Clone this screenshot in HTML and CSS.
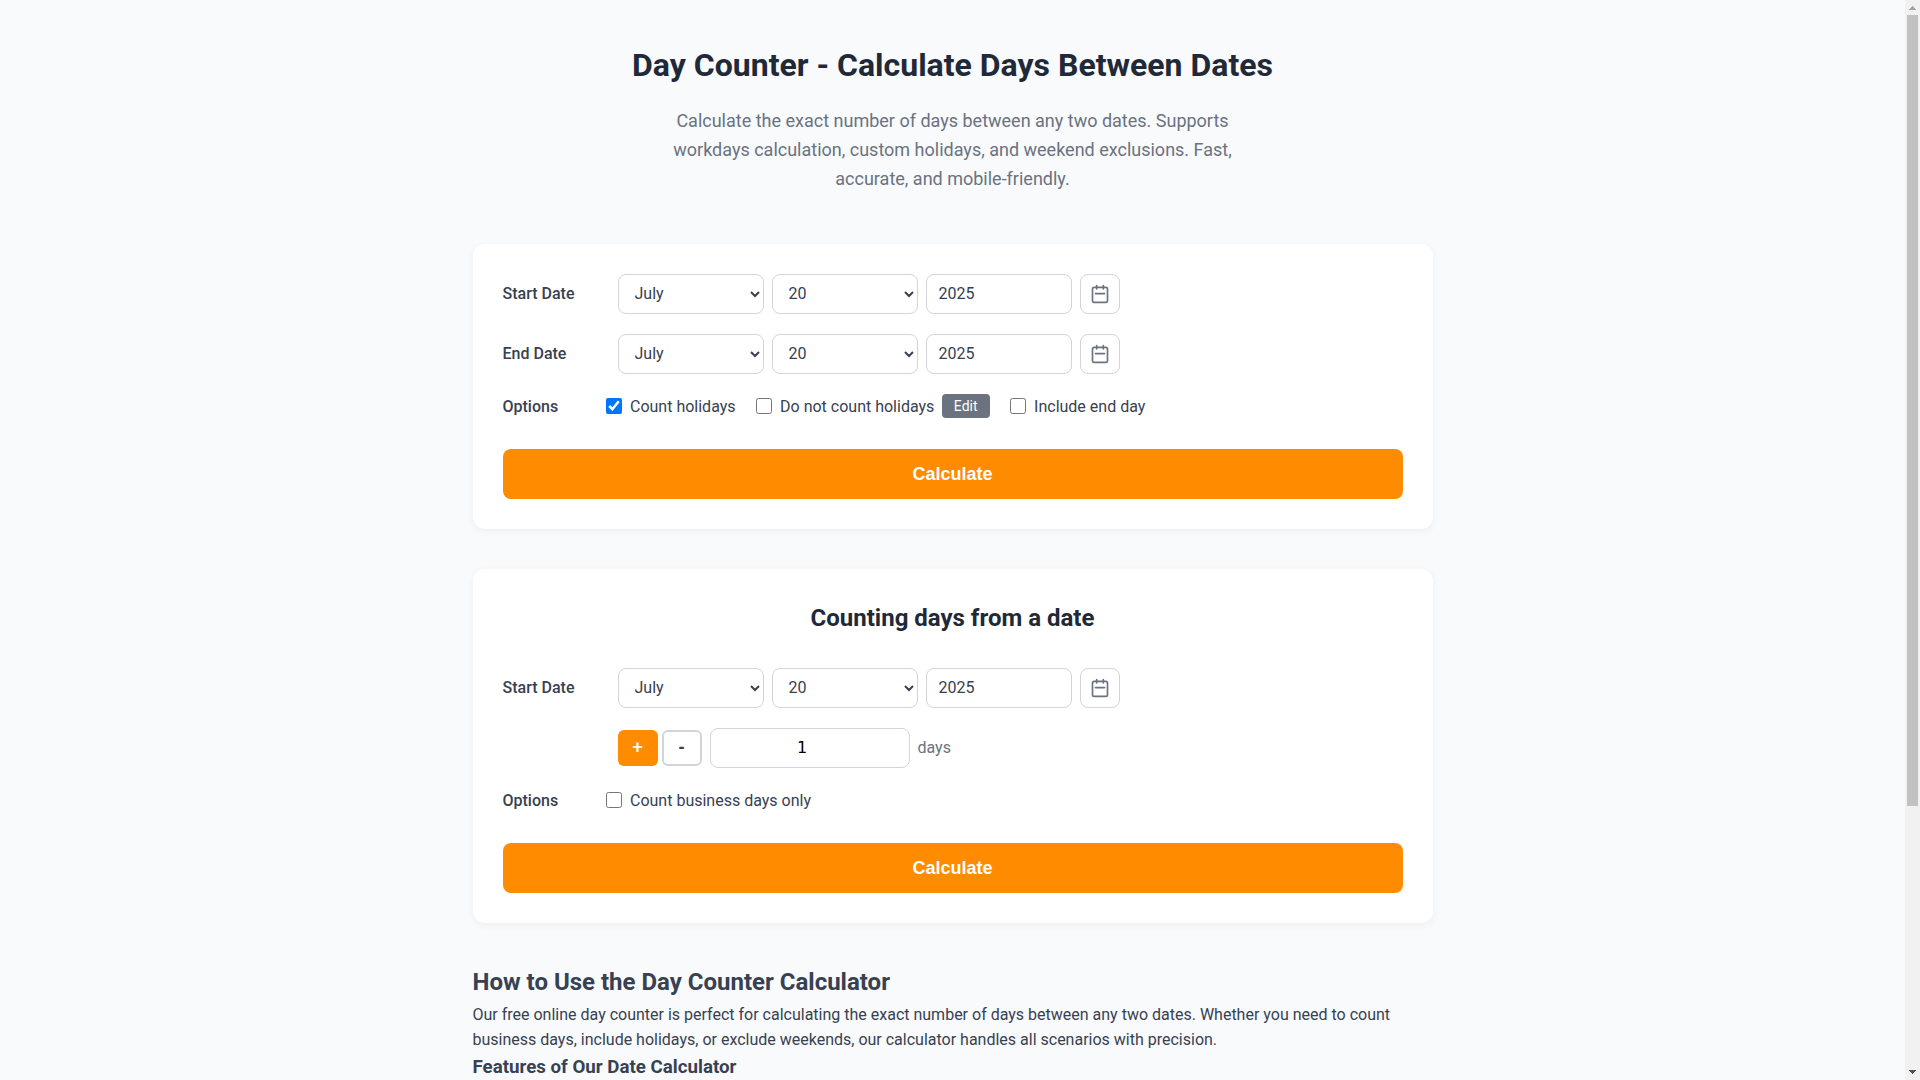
FILE: index.html
```html
<!DOCTYPE html>
<html lang="en">
<head>
<meta charset="utf-8">
<title>Day Counter - Calculate Days Between Dates</title>
<link rel="stylesheet" href="styles.css">
</head>
<body>
<main class="container">
  <header class="page-header">
    <h1>Day Counter - Calculate Days Between Dates</h1>
    <p>Calculate the exact number of days between any two dates. Supports workdays calculation, custom holidays, and weekend exclusions. Fast, accurate, and mobile-friendly.</p>
  </header>

  <section class="card">
    <div class="row">
      <label class="row-label">Start Date</label>
      <div class="fields">
        <select class="field"><option>July</option></select>
        <select class="field"><option>20</option></select>
        <input class="field" type="text" value="2025">
        <button class="icon-btn" type="button" aria-label="Pick a date"><svg viewBox="0 0 24 24" width="20" height="20"><rect x="3" y="4" width="18" height="18" rx="2"/><path d="M8 2v4M16 2v4M6.500 11.500h11"/></svg></button>
      </div>
    </div>
    <div class="row">
      <label class="row-label">End Date</label>
      <div class="fields">
        <select class="field"><option>July</option></select>
        <select class="field"><option>20</option></select>
        <input class="field" type="text" value="2025">
        <button class="icon-btn" type="button" aria-label="Pick a date"><svg viewBox="0 0 24 24" width="20" height="20"><rect x="3" y="4" width="18" height="18" rx="2"/><path d="M8 2v4M16 2v4M6.500 11.500h11"/></svg></button>
      </div>
    </div>
    <div class="row options">
      <span class="options-label">Options</span>
      <label class="check"><input type="checkbox" checked>Count holidays</label>
      <label class="check"><input type="checkbox">Do not count holidays<button class="edit-btn" type="button">Edit</button></label>
      <label class="check"><input type="checkbox">Include end day</label>
    </div>
    <button class="calc" type="button">Calculate</button>
  </section>

  <section class="card">
    <h2 class="card-title">Counting days from a date</h2>
    <div class="row">
      <label class="row-label">Start Date</label>
      <div class="fields">
        <select class="field"><option>July</option></select>
        <select class="field"><option>20</option></select>
        <input class="field" type="text" value="2025">
        <button class="icon-btn" type="button" aria-label="Pick a date"><svg viewBox="0 0 24 24" width="20" height="20"><rect x="3" y="4" width="18" height="18" rx="2"/><path d="M8 2v4M16 2v4M6.500 11.500h11"/></svg></button>
      </div>
    </div>
    <div class="row">
      <span class="row-label"></span>
      <div class="fields">
        <div class="sign-group">
          <button class="sign plus" type="button">+</button>
          <button class="sign minus" type="button">-</button>
        </div>
        <input class="field days-input" type="number" value="1">
        <span class="unit">days</span>
      </div>
    </div>
    <div class="row options">
      <span class="options-label">Options</span>
      <label class="check"><input type="checkbox">Count business days only</label>
    </div>
    <button class="calc" type="button">Calculate</button>
  </section>

  <article class="info">
    <h2>How to Use the Day Counter Calculator</h2>
    <p>Our free online day counter is perfect for calculating the exact number of days between any two dates. Whether you need to count business days, include holidays, or exclude weekends, our calculator handles all scenarios with precision.</p>
    <h3>Features of Our Date Calculator</h3>
    <ul>
      <li>Calculate days between any two dates</li>
      <li>Count or exclude holidays</li>
      <li>Count business days only</li>
      <li>Add or subtract days from a date</li>
      <li>Works on desktop and mobile devices</li>
    </ul>
    <h3>Common Uses</h3>
    <ul>
      <li>Project planning and deadlines</li>
      <li>Counting down to events and vacations</li>
      <li>Contract and payment terms</li>
      <li>Age and anniversary calculations</li>
    </ul>
  </article>
</main>
<div class="scrollbar" aria-hidden="true">
  <svg class="arrow-up" viewBox="0 0 7 4" width="7" height="4"><path d="M3 0h1v1h1v1h1v1h1v1H0V3h1V2h1V1h1z"/></svg>
  <div class="thumb"></div>
  <svg class="arrow-down" viewBox="0 0 7 4" width="7" height="4"><path d="M0 0h7v1H6v1H5v1H4v1H3V3H2V2H1V1H0z"/></svg>
</div>
</body>
</html>
```

FILE: styles.css
```css
* { box-sizing: border-box; }
html, body { margin: 0; padding: 0; }
body {
  padding-right: 15px;
  background: #f8fafc;
  color: #374151;
  font-family: Roboto, "Liberation Sans", sans-serif;
  font-size: 16px;
  line-height: 1.6;
}
.container {
  width: 960px;
  margin: 0 auto;
  padding: 40px 0 30px;
}
.page-header { text-align: center; margin-bottom: 50px; }
.page-header h1 {
  margin: 0 0 16px;
  font-size: 32px;
  font-weight: 700;
  color: #1f2937;
}
.page-header p {
  width: 600px;
  margin: 0 auto;
  font-size: 18px;
  color: #6b7280;
}
.card {
  background: #fff;
  border-radius: 12px;
  box-shadow: 0 2px 8px rgba(0, 0, 0, 0.05);
  padding: 30px;
  margin-bottom: 40px;
}
.card-title {
  margin: 0 0 30px;
  font-size: 24px;
  font-weight: 700;
  color: #1f2937;
  text-align: center;
}
.row { display: flex; align-items: center; margin-bottom: 20px; }
.row-label { width: 115px; flex: none; font-weight: 500; color: #374151; }
.fields { display: flex; align-items: center; gap: 8px; }
.field {
  width: 146px;
  height: 40px;
  padding: 0 12px;
  border: 1px solid #d1d5db;
  border-radius: 8px;
  background: #fff;
  color: #374151;
  font-family: inherit;
  font-size: 16px;
}
.icon-btn {
  width: 40px;
  height: 40px;
  display: flex;
  align-items: center;
  justify-content: center;
  padding: 0;
  border: 1px solid #d1d5db;
  border-radius: 8px;
  background: #fff;
}
.icon-btn svg { fill: none; stroke: #6b7280; stroke-width: 2; stroke-linecap: round; stroke-linejoin: round; }
.options { margin-bottom: 30px; gap: 20px; }
.options-label { width: 83px; flex: none; font-weight: 500; }
.check { display: flex; align-items: center; gap: 8.5px; color: #374151; }
.check input { width: 16px; height: 16px; margin: 0; flex: none; }
.edit-btn {
  height: 24px;
  margin-left: -1px;
  padding: 0 12px;
  border: none;
  border-radius: 4px;
  background: #6b7280;
  color: #fff;
  font-family: inherit;
  font-size: 14px;
}
.calc {
  display: block;
  width: 100%;
  height: 50px;
  border: none;
  border-radius: 8px;
  background: #ff8c00;
  color: #fff;
  font-family: "Liberation Sans", Arial, sans-serif;
  font-size: 18px;
  font-weight: 700;
}
.sign-group { display: flex; gap: 4px; }
.sign {
  width: 40px;
  height: 36px;
  padding: 0;
  border-radius: 6px;
  font-family: "Liberation Sans", Arial, sans-serif;
  font-size: 18px;
  font-weight: 700;
}
.plus { border: none; background: #ff8c00; color: #fff; }
.minus { border: 2px solid #d1d5db; background: #fff; color: #374151; }
.days-input { width: 200px; text-align: center; color: #000; font-family: "DejaVu Sans", sans-serif; }
.unit { color: #6b7280; }
.info h2 { margin: 0; font-size: 24px; font-weight: 700; color: #374151; }
.info p { margin: 0; color: #374151; }
.info h3 { margin: 0; font-size: 18.72px; font-weight: 700; color: #374151; }
.info ul { margin: 8px 0 16px; padding-left: 24px; }
.info li { margin-bottom: 4px; }
.scrollbar {
  position: fixed;
  top: 0;
  right: 0;
  bottom: 0;
  width: 15px;
  background: #f1f1f1;
}
.thumb {
  position: absolute;
  top: 15px;
  left: 2px;
  width: 11px;
  height: 791px;
  background: #c1c1c1;
}
.arrow-up, .arrow-down { position: absolute; left: 4px; shape-rendering: crispEdges; }
.arrow-up { top: 6px; fill: #a3a3a3; }
.arrow-down { bottom: 6px; fill: #505050; }
```
